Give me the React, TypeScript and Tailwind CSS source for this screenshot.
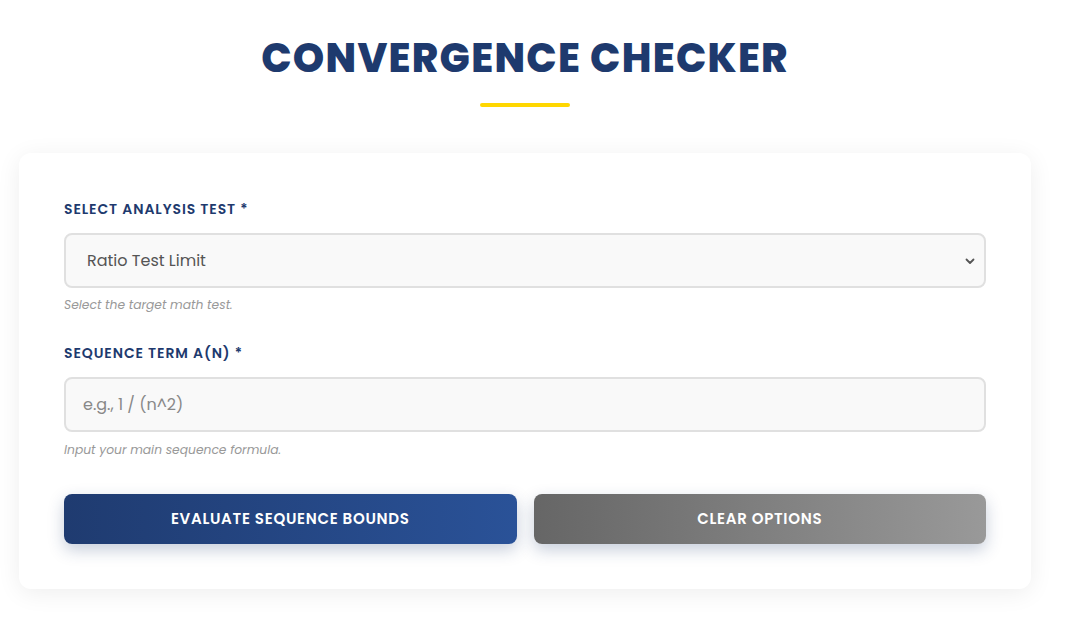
import React from "react";

export default function App() {
  const font = { fontFamily: "Poppins, Inter, 'Noto Sans', sans-serif" };
  return (
    <div className="min-h-screen bg-white" style={font}>
      <div className="w-[1050px] px-[19px] pt-[30px] pb-[40px]">
        <div className="flex flex-col items-center">
          <h1 className="text-[40px] leading-[56px] font-extrabold tracking-[1.3px] text-[#1e3a6e]">
            CONVERGENCE CHECKER
          </h1>
          <div className="mt-[17px] h-[4px] w-[90px] rounded-full bg-[#ffd700]" />
        </div>

        <div className="mt-[46px] rounded-[12px] bg-white px-[45px] pt-[46px] pb-[45px] shadow-[0_4px_24px_rgba(0,0,0,0.07)]">
          <label className="block text-[14px] leading-[20px] font-semibold tracking-[0.9px] text-[#1e3a6e]">
            SELECT ANALYSIS TEST *
          </label>
          <div className="relative mt-[14px]">
            <select
              className="block h-[55px] w-full appearance-none rounded-[8px] border-2 border-[#e0e0e0] bg-[#f9f9f9] pl-[21px] pr-[40px] text-[16px] text-[#555] outline-none"
              defaultValue="ratio"
            >
              <option value="ratio">Ratio Test Limit</option>
              <option value="root">Root Test Limit</option>
            </select>
            <svg
              className="pointer-events-none absolute right-[11px] top-1/2 -translate-y-1/2"
              width="10"
              height="10"
              viewBox="0 0 10 10"
            >
              <path d="M1.5 3.5 L5 7 L8.5 3.5" fill="none" stroke="#555" strokeWidth="1.8" strokeLinecap="round" strokeLinejoin="round" />
            </svg>
          </div>
          <p className="mt-[8px] text-[12.3px] leading-[18px] italic text-[#999]">Select the target math test.</p>

          <label className="mt-[29px] block text-[14px] leading-[20px] font-semibold tracking-[0.9px] text-[#1e3a6e]">
            SEQUENCE TERM A(N) *
          </label>
          <input
            className="mt-[14px] block h-[55px] w-full rounded-[8px] border-2 border-[#e0e0e0] bg-[#f9f9f9] px-[17px] text-[16px] text-[#555] outline-none placeholder:text-[#888]"
            placeholder="e.g., 1 / (n^2)"
          />
          <p className="mt-[9px] text-[12.3px] leading-[18px] italic text-[#999]">Input your main sequence formula.</p>

          <div className="mt-[35px] grid grid-cols-2 gap-[17px]">
            <button className="h-[50px] rounded-[8px] bg-gradient-to-r from-[#1f3b70] to-[#2a5298] text-[15px] font-semibold tracking-[0.7px] text-white shadow-[0_6px_16px_rgba(30,58,110,0.25)]">
              EVALUATE SEQUENCE BOUNDS
            </button>
            <button className="h-[50px] rounded-[8px] bg-gradient-to-r from-[#666] to-[#999] text-[15px] font-semibold tracking-[0.7px] text-white shadow-[0_6px_16px_rgba(30,58,110,0.25)]">
              CLEAR OPTIONS
            </button>
          </div>
        </div>
      </div>
    </div>
  );
}
